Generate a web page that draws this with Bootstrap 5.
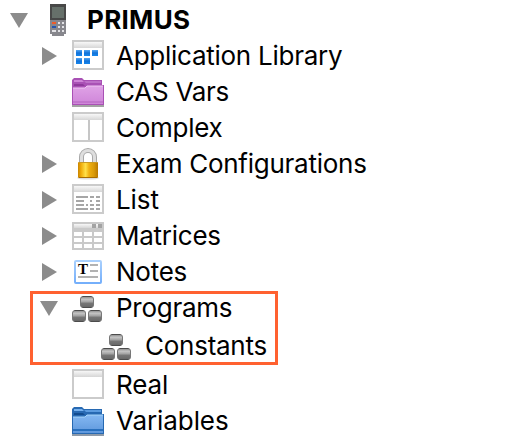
<!DOCTYPE html>
<html lang="en">
<head>
<meta charset="utf-8">
<meta name="viewport" content="width=device-width, initial-scale=1">
<title>PRIMUS</title>
<link href="https://cdn.jsdelivr.net/npm/bootstrap@5.3.0/dist/css/bootstrap.min.css" rel="stylesheet">
<style>
body{font-family:Inter,"Liberation Sans",sans-serif;font-size:26px;line-height:36px;color:#000;background:#fff;overflow:hidden}
.tree{padding-top:2px}
.node{height:36px;padding-left:40px;white-space:nowrap;letter-spacing:-.26px}
.node svg{display:block;flex:none;overflow:visible}
.twist{width:18px;height:32px;margin-right:14px;flex:none;fill:#8c8c8c}
.ico{width:32px;height:32px;margin-right:12px}
.root{padding-left:10px;font-weight:700;letter-spacing:.3px}
.root .twist{margin-right:22px}
.root .ico{width:16px;margin-right:21px}
.boxed{margin:1px 0 2px 30px;width:248px;height:74px;border:3px solid #ff6130;gap:8px}
.boxed .node{height:28px;padding-left:7px}
.boxed .node.child{height:32px;padding-left:68px}
.tight{letter-spacing:-.1px}
</style>
</head>
<body>
<svg width="0" height="0" class="position-absolute" aria-hidden="true">
<defs>
<linearGradient id="bar" x2="0" y2="1"><stop stop-color="#f7f7f7"/><stop offset="1" stop-color="#d6d6d6"/></linearGradient>
<linearGradient id="sq" x2="0" y2="1"><stop stop-color="#55a6f2"/><stop offset=".5" stop-color="#1272d8"/><stop offset="1" stop-color="#1687ee"/></linearGradient>
<linearGradient id="pink" x2="0" y2="1"><stop stop-color="#dfa2e6"/><stop offset="1" stop-color="#cf86d9"/></linearGradient>
<linearGradient id="blue" x2="0" y2="1"><stop stop-color="#84b8f2"/><stop offset="1" stop-color="#5e97dc"/></linearGradient>
<linearGradient id="note" x2="0" y2="1"><stop stop-color="#a9d0fd"/><stop offset="1" stop-color="#74affb"/></linearGradient>
<linearGradient id="gold"><stop stop-color="#c98400"/><stop offset=".15" stop-color="#f0ab08"/><stop offset=".38" stop-color="#ffe14a"/><stop offset=".55" stop-color="#f0b010"/><stop offset=".8" stop-color="#d99a08"/><stop offset="1" stop-color="#b87800"/></linearGradient>
<linearGradient id="steel" x2="0" y2="1"><stop stop-color="#888"/><stop offset=".25" stop-color="#c4c4c4"/><stop offset=".5" stop-color="#a0a0a0"/><stop offset=".6" stop-color="#777"/><stop offset="1" stop-color="#666"/></linearGradient>
<symbol id="right" viewBox="0 0 18 32" overflow="visible"><path d="M2 7v18l15-9z"/></symbol>
<symbol id="down" viewBox="0 0 18 32" overflow="visible"><path d="M0 9h18L9 24z"/></symbol>
<symbol id="win" viewBox="0 0 32 32" overflow="visible"><path d="M1 1h30v28H1z" fill="#fff" stroke="#cbcbcb" stroke-width="2"/><path d="M2 2h28v6H2z" fill="url(#bar)"/></symbol>
<symbol id="brick" viewBox="0 0 14 12"><rect x=".5" y=".5" width="13" height="11" rx="2.5" fill="url(#steel)" stroke="#777"/><path d="M2.500 .5h9M2.500 11.500h9" stroke="#4c4c4c"/></symbol>
<symbol id="bricks" viewBox="0 0 32 32" overflow="visible"><use href="#brick" x="8" y="4" width="14" height="12"/><use href="#brick" x="0" y="18" width="14" height="12"/><use href="#brick" x="16" y="18" width="14" height="12"/></symbol>
</defs>
</svg>
<main class="tree d-flex flex-column">
<div class="node root d-flex align-items-center"><svg class="twist"><use href="#down" width="18" height="32"/></svg>
<svg class="ico" viewBox="0 0 16 32"><path d="M0 0h16v16H0z" fill="#484848"/><path d="M2 3h12v11H2z" fill="#66706a"/><path d="M0 16h16v14h-2v2H2v-2H0z" fill="#87878d"/><path d="M2 18h4v2H2z" fill="#f05a28"/><path d="M2 22h4v2H2z" fill="#2555b0"/><path d="M2 26h4v2H2zM8 18h2v2H8zM12 18h2v2h-2zM8 22h2v2H8zM12 22h2v2h-2zM8 26h2v2H8zM12 26h2v2h-2z" fill="#e2e2e6"/></svg><span>PRIMUS</span></div>

<div class="node d-flex align-items-center"><svg class="twist"><use href="#right" width="18" height="32"/></svg>
<svg class="ico"><use href="#win" width="32" height="32"/><path d="M4 10h6v6H4zM12 10h6v6h-6zM20 10h6v6h-6z" fill="url(#sq)"/><path d="M4 18h6v6H4zM12 18h6v6h-6z" fill="url(#sq)"/></svg><span>Application Library</span></div>

<div class="node d-flex align-items-center"><span class="twist"></span>
<svg class="ico"><path d="M0 4l2-2h8l2 2h18v5h2v22H0z" fill="#a951b5"/><path d="M2 4h8l2 2h-10z" fill="#cf84d8"/><path d="M12 5h17v2H14z" fill="#bd70c8"/><path d="M2 8h9l2 2h-11z" fill="#8f399c"/><path d="M1 12h12l2-2h16v18H1z" fill="url(#pink)"/><path d="M1 12h12l2-2h16" fill="none" stroke="#f0c6f4"/><path d="M1 26h30" stroke="#b363be"/><path d="M0 29h32v2H0z" fill="#a3a3a3"/></svg><span>CAS Vars</span></div>

<div class="node d-flex align-items-center"><span class="twist"></span>
<svg class="ico"><use href="#win" width="32" height="32"/><path d="M17 8v20" stroke="#c6c6c6" stroke-width="2"/></svg><span>Complex</span></div>

<div class="node d-flex align-items-center"><svg class="twist"><use href="#right" width="18" height="32"/></svg>
<svg class="ico"><ellipse cx="16" cy="30" rx="11" ry="1.6" fill="#ddd"/><path d="M9.500 15V9a6.500 6.500 0 0 1 13 0v6" fill="none" stroke="#a8a8a8" stroke-width="5"/><path d="M9.500 15V9a6.500 6.500 0 0 1 13 0v6" fill="none" stroke="#dedede" stroke-width="3"/><rect x="6" y="14" width="20" height="16" rx="1" fill="url(#gold)"/><path d="M7 14.500h18" stroke="#c99a22"/><path d="M7 29.500h18" stroke="#a86d00"/></svg><span>Exam Configurations</span></div>

<div class="node d-flex align-items-center"><svg class="twist"><use href="#right" width="18" height="32"/></svg>
<svg class="ico"><use href="#win" width="32" height="32"/><path d="M4 13h12M18 13h4M24 13h4M4 17h8M18 17h2M24 17h4M4 21h8M14 21h2M18 21h4M24 21h4M4 25h12M18 25h4M24 25h4" stroke="#a6a6a6" stroke-width="2"/></svg><span class="tight">List</span></div>

<div class="node d-flex align-items-center"><svg class="twist"><use href="#right" width="18" height="32"/></svg>
<svg class="ico"><path d="M0 2h32v28H0z" fill="#c9c9c9"/><path d="M2 4h28v4H2z" fill="url(#bar)"/><path d="M20 4h4v4h-4zM26 4h4v4h-4z" fill="#a3a3a3"/><path d="M2 12h8v4H2zM12 12h8v4h-8zM22 12h8v4h-8zM2 18h8v4H2zM12 18h8v4h-8zM22 18h8v4h-8zM2 24h8v4H2zM12 24h8v4h-8zM22 24h8v4h-8z" fill="#fff"/></svg><span>Matrices</span></div>

<div class="node d-flex align-items-center"><svg class="twist"><use href="#right" width="18" height="32"/></svg>
<svg class="ico"><rect x="3" y="5" width="26" height="22" rx="1" fill="#fff" stroke="url(#note)" stroke-width="2"/><text x="6" y="18" font-family="Liberation Serif,serif" font-weight="700" font-size="15" fill="#000">T</text><path d="M18 9h8M18 15h8M6 21h20" stroke="#999" stroke-width="1.600"/></svg><span>Notes</span></div>

<section class="boxed d-flex flex-column">
<div class="node d-flex align-items-center"><svg class="twist"><use href="#down" width="18" height="32"/></svg>
<svg class="ico"><use href="#bricks" width="32" height="32"/></svg><span>Programs</span></div>
<div class="node child d-flex align-items-center"><svg class="ico"><use href="#bricks" width="32" height="32"/></svg><span>Constants</span></div>
</section>

<div class="node d-flex align-items-center"><span class="twist"></span>
<svg class="ico"><use href="#win" width="32" height="32"/></svg><span class="tight">Real</span></div>

<div class="node d-flex align-items-center"><span class="twist"></span>
<svg class="ico"><path d="M0 4l2-2h8l2 2h18v5h2v22H0z" fill="#2769b2"/><path d="M2 4h8l2 2h-10z" fill="#76b1ee"/><path d="M12 5h17v2H14z" fill="#5b9bdf"/><path d="M2 8h9l2 2h-11z" fill="#124c8f"/><path d="M1 12h12l2-2h16v18H1z" fill="url(#blue)"/><path d="M1 12h12l2-2h16" fill="none" stroke="#a5d5fa"/><path d="M1 25h30" stroke="#286fbd" stroke-width="2"/><path d="M0 29h32v2H0z" fill="#8e9aa8"/></svg><span class="tight">Variables</span></div>
</main>
<script src="https://cdn.jsdelivr.net/npm/bootstrap@5.3.0/dist/js/bootstrap.bundle.min.js"></script>
</body>
</html>
